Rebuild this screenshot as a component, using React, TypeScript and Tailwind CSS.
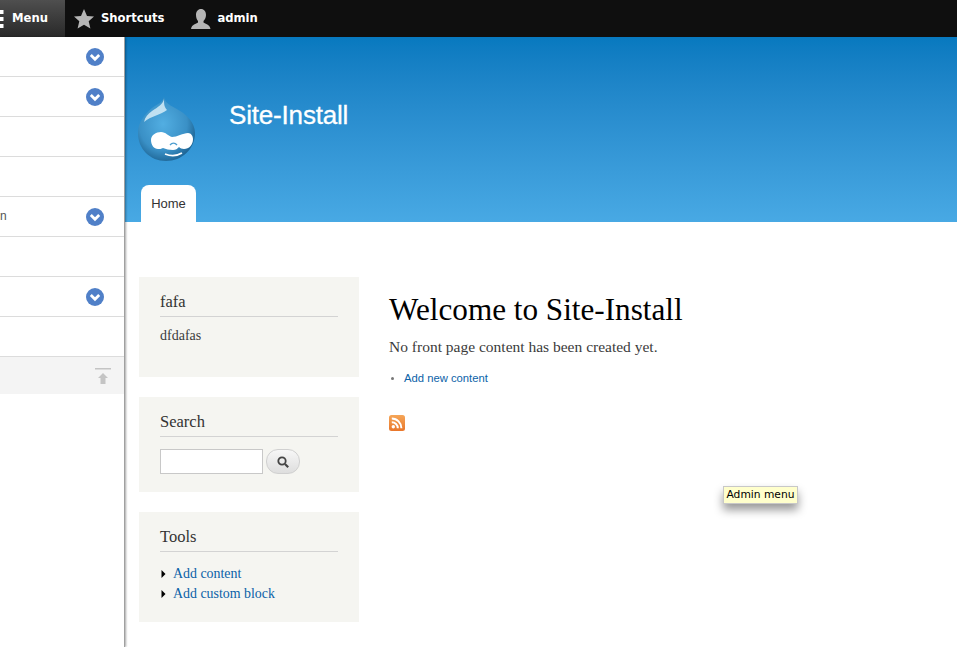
import React from "react";

const serif = "font-['Liberation_Serif',serif]";

function Chevron() {
  return (
    <svg width="18" height="18" viewBox="0 0 18 18" aria-hidden="true">
      <circle cx="9" cy="9" r="9" fill="#5080c8" />
      <path d="M4.800 7 9 11.200 13.200 7" fill="none" stroke="#fff" strokeWidth="2.800" />
    </svg>
  );
}

function Row({ text, chevron }: { text?: string; chevron?: boolean }) {
  return (
    <div className="h-10 border-b border-[#dcdcdc] flex items-center justify-end pr-[20px] relative">
      {text && (
        <span className="absolute left-0 top-[10px] text-[12px] leading-[18px] text-[#555]">{text}</span>
      )}
      {chevron && <Chevron />}
    </div>
  );
}

function Drop() {
  return (
    <svg width="60" height="66" viewBox="0 0 60 66" aria-hidden="true">
      <defs>
        <radialGradient id="d" cx="44%" cy="42%" r="60%">
          <stop offset="0%" stopColor="#52aee2" />
          <stop offset="70%" stopColor="#3a90c6" />
          <stop offset="100%" stopColor="#1f6797" />
        </radialGradient>
      </defs>
      <path d="M27 1c1 5 5 8 11 11 12 6 20 15 20 25 0 16-13 28-29 28S1 53 1 37c0-11 7-19 14-25 6-4 11-6 12-11z" fill="url(#d)" />
      <path d="M27 3c-1 5-6 8-12 12-4 3-7 6-8 11 7-6 16-7 23-12-3-3-3-7-3-11z" fill="#d6ecf7" opacity=".85" />
      <path d="M14 44c0-5 5-8 10-8 5 0 7 4 11 5 5 0 11-4 16-4 3 0 5 3 5 6 0 6-4 10-9 10-2 0-4-1-5-2-2 2-3 3-6 3-4 0-7-1-10-2-2 1-3 1-5 1-4 0-7-4-7-9z" fill="#fff" />
      <path d="M33 49c2-2.500 5-2.500 7 0" fill="none" stroke="#4e9fd0" strokeWidth="1.300" />
      <path d="M28 58c5 2 12 2 17-1" fill="none" stroke="#fff" strokeWidth="1.700" />
    </svg>
  );
}

function Block({ title, h, children }: { title: string; h: string; children: React.ReactNode }) {
  return (
    <section className={`bg-[#f5f5f1] px-[21px] ${h}`}>
      <h2 className={`h-[40px] pt-[15px] border-b border-[#d3d3d3] text-[16.500px] leading-[20px] text-[#333] ${serif}`}>
        {title}
      </h2>
      {children}
    </section>
  );
}

export default function App() {
  return (
    <div className="relative h-[647px] w-full overflow-hidden bg-white font-['Liberation_Sans',sans-serif]">
      <nav className="h-[37px] bg-[#0f0f0f] flex items-center text-white font-['DejaVu_Sans',sans-serif] font-bold text-[11.600px]">
        <div className="w-[65px] h-full bg-gradient-to-b from-[#4f4f4f] to-[#292929] flex items-center">
          <svg width="4" height="20" viewBox="0 0 4 20" aria-hidden="true" className="mr-[8px]">
            <rect y="1" width="3.500" height="4" fill="#fff" />
            <rect y="8" width="3.500" height="4" fill="#fff" />
            <rect y="15" width="3.500" height="4" fill="#fff" />
          </svg>
          Menu
        </div>
        <svg width="20" height="20" viewBox="0 0 20 20" aria-hidden="true" className="ml-[9px] mr-[7px]">
          <path d="M10 0l3 7 7 .6-5.300 4.700 1.700 7.200L10 15.700 3.600 19.500l1.700-7.200L0 7.600 7 7z" fill="#b5b5b5" />
        </svg>
        Shortcuts
        <svg width="20" height="20" viewBox="0 0 20 20" aria-hidden="true" className="ml-[27px] mr-[6px]">
          <path d="M10 0c3 0 5 2.400 5 6 0 3-1.500 5-2.500 6v1.500c2 1.500 6 1.500 7 6.500H0c1-5 5-5 7-6.500V12C6 11 5 9 5 6c0-3.600 2-6 5-6z" fill="#b5b5b5" />
        </svg>
        admin
      </nav>

      <header className="h-[185px] bg-gradient-to-b from-[#0779bf] to-[#48a9e4] pl-[141px] flex flex-col">
        <div className="flex h-[148px]">
          <div className="ml-[-4px] mt-[59px]">
            <Drop />
          </div>
          <h1 className="ml-[32px] mt-[62px] text-[26px] leading-[32px] text-white tracking-[-0.180px] [-webkit-text-stroke:0.3px_white]">
            Site-Install
          </h1>
        </div>
        <div className="w-[55px] h-[37px] bg-white rounded-t-lg flex items-center justify-center text-[13px] text-[#333]">
          Home
        </div>
      </header>

      <div className="flex pl-[139px] pt-[55px]">
        <aside className="w-[220px] flex flex-col gap-5">
          <Block title="fafa" h="h-[100px]">
            <p className={`mt-[10px] text-[14px] leading-[18px] text-[#3b3b3b] ${serif}`}>dfdafas</p>
          </Block>
          <Block title="Search" h="h-[95px]">
            <div className="flex mt-[12px] gap-[3px]">
              <div className="w-[103px] h-[25px] bg-white border border-[#c8c8c8]" />
              <div className="w-[34px] h-[25px] rounded-[12px] border border-[#d0d0d0] bg-gradient-to-b from-[#f7f7f7] to-[#dedede] flex items-center justify-center">
                <svg width="12" height="12" viewBox="0 0 12 12" aria-hidden="true">
                  <circle cx="5" cy="5" r="3.700" fill="none" stroke="#444" strokeWidth="1.800" />
                  <path d="M8 8l3.200 3.200" stroke="#444" strokeWidth="2.200" />
                </svg>
              </div>
            </div>
          </Block>
          <Block title="Tools" h="h-[110px]">
            <ul className={`mt-[12px] text-[13.900px] leading-[20px] text-[#0b62a8] ${serif}`}>
              {["Add content", "Add custom block"].map((t) => (
                <li key={t} className="flex items-center">
                  <svg width="13" height="10" viewBox="0 0 13 10" aria-hidden="true">
                    <path d="M1.500 1l4 4-4 4z" fill="#000" />
                  </svg>
                  {t}
                </li>
              ))}
            </ul>
          </Block>
        </aside>

        <main className="ml-[30px] pt-[15px]">
          <h2 className={`text-[31.200px] leading-[36px] text-black ${serif}`}>Welcome to Site-Install</h2>
          <p className={`mt-[9px] text-[15.500px] leading-[20px] text-[#3b3b3b] ${serif}`}>
            No front page content has been created yet.
          </p>
          <div className="mt-[13px] flex items-center text-[11.250px] leading-[16px] text-[#0b62a8]">
            <span className="w-[3px] h-[3px] ml-[2px] mr-[10px] rounded-full bg-[#777]" />
            Add new content
          </div>
          <svg width="16" height="16" viewBox="0 0 16 16" aria-hidden="true" className="mt-[29px] block">
            <defs>
              <linearGradient id="r" x1="0" y1="0" x2="0" y2="1">
                <stop offset="0" stopColor="#f5a658" />
                <stop offset="1" stopColor="#e9762a" />
              </linearGradient>
            </defs>
            <rect width="16" height="16" rx="2.500" fill="url(#r)" />
            <circle cx="4.300" cy="11.700" r="1.700" fill="#fff" />
            <path d="M2.800 7.200a6 6 0 0 1 6 6M2.800 3.600a9.600 9.600 0 0 1 9.600 9.600" fill="none" stroke="#fff" strokeWidth="2" />
          </svg>
        </main>
      </div>

      <div className="absolute left-0 top-[37px] bottom-0 w-[125px] bg-white border-r border-[#a0a0a0] shadow-[1px_0_2px_rgba(0,0,0,0.35)]">
        <Row chevron />
        <Row chevron />
        <Row />
        <Row />
        <Row text="n" chevron />
        <Row />
        <Row chevron />
        <Row />
        <div className="h-[38px] -mt-px border-t border-[#dcdcdc] bg-[#f4f4f4] flex justify-end pr-[13px] pt-[11px]">
          <svg width="16" height="17" viewBox="0 0 16 17" aria-hidden="true">
            <rect width="16" height="1.500" fill="#c4c4c4" />
            <path d="M8 5l5 5h-2.500v6h-5v-6H3z" fill="#c4c4c4" />
          </svg>
        </div>
      </div>

      <div className="absolute left-[723px] top-[486px] h-[18px] w-[75px] bg-[#ffffcc] border border-[#c8c8c8] text-[10.700px] leading-[16px] text-black text-center font-['DejaVu_Sans',sans-serif] shadow-[0_6px_10px_rgba(0,0,0,0.4)]">
        Admin menu
      </div>
    </div>
  );
}
